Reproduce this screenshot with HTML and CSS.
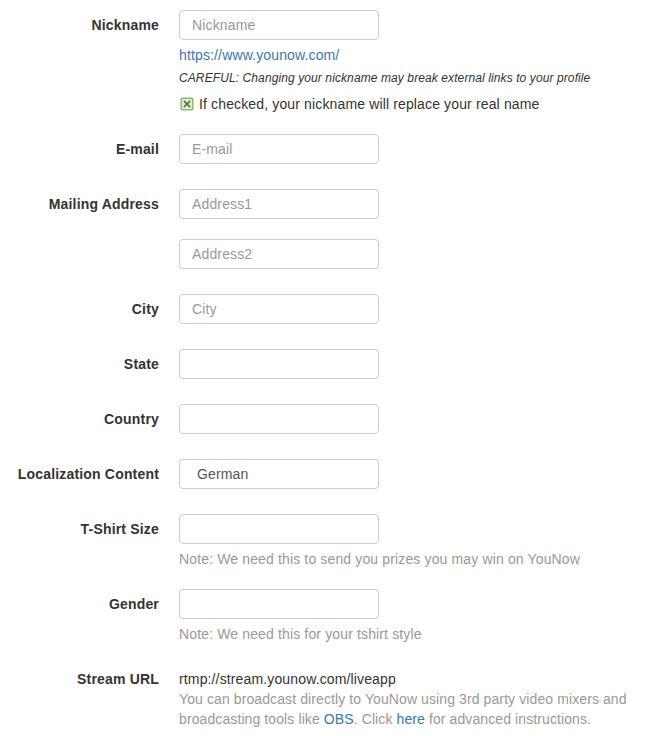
FILE: index.html
```html
<!DOCTYPE html>
<html lang="en">
<head>
<meta charset="utf-8">
<title>Profile settings</title>
<link rel="stylesheet" href="styles.css">
</head>
<body>
<form class="form">
  <div class="row row-nick">
    <label class="label">Nickname</label>
    <div class="control">
      <div class="input placeholder">Nickname</div>
      <a class="link url" href="#">https://www.younow.com/</a>
      <div class="careful">CAREFUL: Changing your nickname may break external links to your profile</div>
      <div class="check">
        <svg class="box" width="14" height="14" viewBox="0 0 14 14">
          <rect x="0.5" y="0.5" width="13" height="13" rx="2" fill="#8fb46e"/>
          <rect x="2" y="2" width="10" height="10" rx="1" fill="#e3efd8"/>
          <path d="M4.5 4.5 L9.5 9.5 M9.5 4.5 L4.5 9.5" stroke="#5c7f40" stroke-width="1.8" stroke-linecap="square"/>
        </svg>
        <span>If checked, your nickname will replace your real name</span>
      </div>
    </div>
  </div>

  <div class="row">
    <label class="label">E-mail</label>
    <div class="control"><div class="input placeholder">E-mail</div></div>
  </div>

  <div class="row">
    <label class="label">Mailing Address</label>
    <div class="control">
      <div class="input placeholder">Address1</div>
      <div class="input placeholder second">Address2</div>
    </div>
  </div>

  <div class="row">
    <label class="label">City</label>
    <div class="control"><div class="input placeholder">City</div></div>
  </div>

  <div class="row">
    <label class="label">State</label>
    <div class="control"><div class="input"></div></div>
  </div>

  <div class="row">
    <label class="label">Country</label>
    <div class="control"><div class="input"></div></div>
  </div>

  <div class="row">
    <label class="label">Localization Content</label>
    <div class="control"><div class="input select">German</div></div>
  </div>

  <div class="row row-help">
    <label class="label">T-Shirt Size</label>
    <div class="control">
      <div class="input"></div>
      <div class="help">Note: We need this to send you prizes you may win on YouNow</div>
    </div>
  </div>

  <div class="row row-help2">
    <label class="label">Gender</label>
    <div class="control">
      <div class="input"></div>
      <div class="help">Note: We need this for your tshirt style</div>
    </div>
  </div>

  <div class="row row-stream">
    <label class="label label-text">Stream URL</label>
    <div class="control">
      <div class="stream">rtmp://stream.younow.com/liveapp</div>
      <div class="help desc">You can broadcast directly to YouNow using 3rd party video mixers and broadcasting tools like <a class="link" href="#">OBS</a>. Click <a class="link" href="#">here</a> for advanced instructions.</div>
    </div>
  </div>
</form>
</body>
</html>
```

FILE: styles.css
```css
* { box-sizing: border-box; }

html, body {
  margin: 0;
  padding: 0;
  background: #fff;
}

body {
  font-family: "Liberation Sans", Arial, Helvetica, sans-serif;
  font-size: 14px;
  line-height: 20px;
  color: #333;
  letter-spacing: 0.14px;
}

.form {
  padding-top: 10px;
  width: 647px;
}

.row {
  display: flex;
  align-items: flex-start;
  margin-bottom: 25px;
}

.row-nick { margin-bottom: 20px; }
.row-help { margin-bottom: 20px; }
.row-help2 { margin-bottom: 25px; }

.label {
  width: 159px;
  flex: 0 0 159px;
  text-align: right;
  font-weight: bold;
  line-height: 30px;
  letter-spacing: 0.18px;
}

.label-text { line-height: 20px; }

.control {
  margin-left: 20px;
  width: 458px;
  display: flex;
  flex-direction: column;
  align-items: flex-start;
}

.input {
  width: 200px;
  height: 30px;
  border: 1px solid #ccc;
  border-radius: 4px;
  padding: 0 12px;
  line-height: 28px;
  font-size: 14px;
  color: #555;
  background: #fff;
}

.input.second { margin-top: 20px; }

.placeholder { color: #999; }

.select { padding-left: 17px; }

.link {
  color: #337ab7;
  text-decoration: none;
}

.url {
  margin-top: 5px;
  line-height: 20px;
}

.careful {
  margin-top: 5px;
  font-size: 12px;
  font-style: italic;
  line-height: 16px;
  color: #333;
  letter-spacing: 0.1px;
}

.check {
  margin-top: 8px;
  display: flex;
  align-items: center;
  height: 20px;
}

.box {
  margin-left: 1px;
  margin-right: 5px;
  flex: 0 0 auto;
}

.help {
  margin-top: 5px;
  color: #999;
  line-height: 20px;
}

.stream { color: #333; }

.desc {
  margin-top: 0;
  letter-spacing: 0.1px;
}
```
